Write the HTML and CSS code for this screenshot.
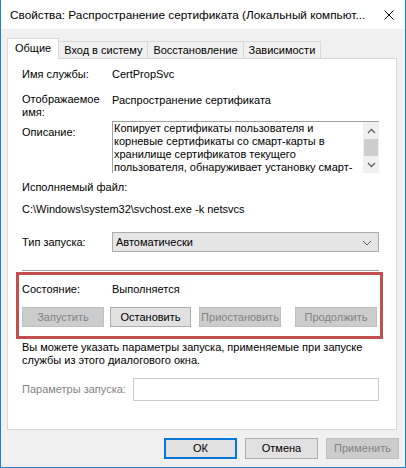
FILE: index.html
```html
<!DOCTYPE html>
<html lang="ru">

<head>
    <meta charset="UTF-8">
    <meta name="viewport" content="width=device-width, initial-scale=1.0">
    <title>Свойства службы</title>
    <link rel="stylesheet" href="styles.css">
</head>

<body>
    <div class="window">
        <div class="titleBar">
            <span class="titleText">Свойства: Распространение сертификата (Локальный компьют...</span>
            <svg class="closeIcon" width="10" height="10" viewBox="0 0 10 10">
                <path d="M0.5 0.5 L9.5 9.5 M9.5 0.5 L0.5 9.5" stroke="#000" stroke-width="1" fill="none" />
            </svg>
        </div>
        <div class="dialogBody">
            <div class="tabs">
                <div class="tab active">Общие</div>
                <div class="tab">Вход в систему</div>
                <div class="tab">Восстановление</div>
                <div class="tab">Зависимости</div>
            </div>
            <div class="tabPanel">
                <div class="fieldRow rowName">
                    <div class="fieldLabel">Имя службы:</div>
                    <div class="fieldValue">CertPropSvc</div>
                </div>
                <div class="fieldRow rowDisplay">
                    <div class="fieldLabel">Отображаемое<br>имя:</div>
                    <div class="fieldValue">Распространение сертификата</div>
                </div>
                <div class="fieldRow rowDesc">
                    <div class="fieldLabel descLabel">Описание:</div>
                    <div class="descBox">
                        <div class="descText">
                            <div>Копирует сертификаты пользователя и</div>
                            <div>корневые сертификаты со смарт-карты в</div>
                            <div>хранилище сертификатов текущего</div>
                            <div>пользователя, обнаруживает установку смарт-</div>
                        </div>
                        <div class="scrollBar">
                            <div class="scrollArrow">
                                <svg width="9" height="6" viewBox="0 0 9 6">
                                    <path d="M1 5 L4.5 1.5 L8 5" stroke="#606060" stroke-width="1.3" fill="none" />
                                </svg>
                            </div>
                            <div class="scrollThumb"></div>
                            <div class="scrollArrow">
                                <svg width="9" height="6" viewBox="0 0 9 6">
                                    <path d="M1 1 L4.5 4.5 L8 1" stroke="#606060" stroke-width="1.3" fill="none" />
                                </svg>
                            </div>
                        </div>
                    </div>
                </div>
                <div class="plainText rowExeLabel">Исполняемый файл:</div>
                <div class="plainText rowExePath">C:\Windows\system32\svchost.exe -k netsvcs</div>
                <div class="fieldRow rowStartup">
                    <div class="fieldLabel">Тип запуска:</div>
                    <div class="selectBox">
                        <span>Автоматически</span>
                        <svg width="10" height="6" viewBox="0 0 10 6">
                            <path d="M1 1 L5 5 L9 1" stroke="#606060" stroke-width="1" fill="none" />
                        </svg>
                    </div>
                </div>
                <div class="separator"></div>
                <div class="statusBox">
                    <div class="fieldRow">
                        <div class="fieldLabel">Состояние:</div>
                        <div class="fieldValue">Выполняется</div>
                    </div>
                    <div class="statusButtons">
                        <button class="button disabled">Запустить</button>
                        <button class="button btnStop">Остановить</button>
                        <button class="button disabled btnPause">Приостановить</button>
                        <button class="button disabled btnResume">Продолжить</button>
                    </div>
                </div>
                <div class="plainText hintText">Вы можете указать параметры запуска, применяемые при запуске<br>службы из этого диалогового окна.</div>
                <div class="paramsRow">
                    <div class="paramsLabel">Параметры запуска:</div>
                    <div class="paramsInput"></div>
                </div>
            </div>
            <div class="dialogButtons">
                <button class="button default">ОК</button>
                <button class="button">Отмена</button>
                <button class="button disabled">Применить</button>
            </div>
        </div>
    </div>
</body>

</html>
```

FILE: styles.css
```css
* {
    box-sizing: border-box;
}

body {
    margin: 0;
    font-family: 'Segoe UI', 'Liberation Sans', sans-serif;
    font-size: 11px;
    line-height: 13px;
    color: #000;
}

.window {
    width: 406px;
    height: 468px;
    border: 1px solid #1883d7;
    border-top: none;
    display: flex;
    flex-direction: column;
    background-color: #f0f0f0;
}

.titleBar {
    height: 29px;
    background-color: #fff;
    display: flex;
    align-items: center;
    padding: 0 10px 0 9px;
}

.titleText {
    flex: 1;
    font-size: 11.8px;
    white-space: nowrap;
    padding-top: 2px;
}

.closeIcon {
    margin-right: 1px;
}

.dialogBody {
    flex: 1;
    padding: 9px 8px 8px 6px;
    display: flex;
    flex-direction: column;
}

.tabs {
    display: flex;
    align-items: flex-end;
    margin-bottom: -1px;
    position: relative;
    z-index: 1;
}

.tab {
    height: 18px;
    padding: 1px 5px 0 5px;
    border: 1px solid #d9d9d9;
    background-color: #f0f0f0;
    margin-left: -1px;
    display: flex;
    align-items: center;
}

.tab.active {
    height: 21px;
    margin-left: 0;
    padding: 0 7px 2px 7px;
    background-color: #fff;
    border-bottom: none;
}

.tabPanel {
    height: 372px;
    border: 1px solid #d9d9d9;
    background-color: #fff;
    padding: 0 17px 0 14px;
    display: flex;
    flex-direction: column;
}

.fieldRow {
    display: flex;
    align-items: flex-start;
}

.fieldLabel {
    width: 90px;
    flex-shrink: 0;
}

.fieldValue {
    flex: 1;
}

.rowName {
    margin-top: 9px;
}

.rowDisplay {
    margin-top: 12px;
}

.rowDisplay .fieldValue {
    padding-top: 1px;
}

.rowDesc {
    margin-top: 2px;
}

.descLabel {
    padding-top: 5px;
}

.descBox {
    flex: 1;
    height: 52px;
    border-top: 1px solid #a0a0a0;
    border-left: 1px solid #a0a0a0;
    display: flex;
}

.descText {
    flex: 1;
    padding-left: 1px;
    overflow: hidden;
    white-space: nowrap;
}

.scrollBar {
    width: 16px;
    background-color: #f0f0f0;
    display: flex;
    flex-direction: column;
}

.scrollArrow {
    height: 17px;
    display: flex;
    align-items: center;
    justify-content: center;
}

.scrollThumb {
    height: 17px;
    margin: 0 1px;
    background-color: #cdcdcd;
}

.rowExeLabel {
    margin-top: 8px;
}

.rowExePath {
    margin-top: 9px;
}

.rowStartup {
    margin-top: 16px;
    align-items: center;
}

.selectBox {
    flex: 1;
    height: 20px;
    border: 1px solid #adadad;
    background-color: #e5e5e5;
    display: flex;
    align-items: center;
    justify-content: space-between;
    padding: 1px 6px 0 3px;
}

.separator {
    margin-top: 18px;
    height: 1px;
    background-color: #a0a0a0;
}

.statusBox {
    margin: 1px -4px 0 -6px;
    border: 3px solid #c24f4e;
    padding: 8px 1px 9px 3px;
}

.statusButtons {
    margin-top: 11px;
    display: flex;
}

.button {
    font-family: inherit;
    font-size: 11px;
    line-height: 13px;
    color: #000;
    height: 20px;
    width: 82px;
    padding: 0;
    border: 1px solid #adadad;
    background-color: #e1e1e1;
}

.button.disabled {
    color: #838383;
    border-color: #bfbfbf;
    background-color: #cccccc;
}

.btnStop {
    width: 81px;
    margin-left: 6px;
}

.btnPause {
    margin-left: 8px;
}

.btnResume {
    margin-left: 14px;
}

.hintText {
    margin-top: 2px;
    white-space: nowrap;
}

.paramsRow {
    margin-top: 11px;
    display: flex;
    align-items: center;
}

.paramsLabel {
    width: 111px;
    color: #838383;
}

.paramsInput {
    flex: 1;
    height: 23px;
    border: 1px solid #cccccc;
    background-color: #fff;
}

.dialogButtons {
    margin-top: 8px;
    margin-right: -2px;
    display: flex;
    justify-content: flex-end;
    gap: 8px;
}

.dialogButtons .button {
    width: 73px;
    height: 21px;
}

.button.default {
    border: 2px solid #0078d7;
}
```
